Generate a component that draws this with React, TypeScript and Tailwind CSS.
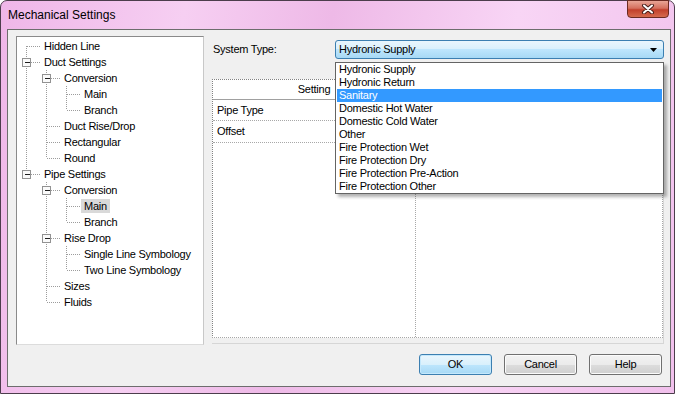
import React from "react";

type TreeNode = { label: string; children?: TreeNode[]; selected?: boolean };

type Row = {
  label: string;
  level: number;
  guides: boolean[];
  isLast: boolean;
  isFirstRoot: boolean;
  hasChildren: boolean;
  selected?: boolean;
};

const tree: TreeNode[] = [
  { label: "Hidden Line" },
  {
    label: "Duct Settings",
    children: [
      { label: "Conversion", children: [{ label: "Main" }, { label: "Branch" }] },
      { label: "Duct Rise/Drop" },
      { label: "Rectangular" },
      { label: "Round" },
    ],
  },
  {
    label: "Pipe Settings",
    children: [
      {
        label: "Conversion",
        children: [{ label: "Main", selected: true }, { label: "Branch" }],
      },
      {
        label: "Rise Drop",
        children: [{ label: "Single Line Symbology" }, { label: "Two Line Symbology" }],
      },
      { label: "Sizes" },
      { label: "Fluids" },
    ],
  },
];

const systemTypes = [
  "Hydronic Supply",
  "Hydronic Return",
  "Sanitary",
  "Domestic Hot Water",
  "Domestic Cold Water",
  "Other",
  "Fire Protection Wet",
  "Fire Protection Dry",
  "Fire Protection Pre-Action",
  "Fire Protection Other",
];

const flatten = (nodes: TreeNode[], level: number, guides: boolean[], out: Row[]) => {
  nodes.forEach((node, i) => {
    const isLast = i === nodes.length - 1;
    out.push({
      label: node.label,
      level,
      guides,
      isLast,
      isFirstRoot: level === 0 && i === 0,
      hasChildren: !!node.children,
      selected: node.selected,
    });
    if (node.children) flatten(node.children, level + 1, [...guides, !isLast], out);
  });
  return out;
};

const rows = flatten(tree, 0, [], []);

const LINE = "#9c9c9c";

const Connector = ({ row }: { row: Row }) => {
  const L = row.level;
  const cx = 9.5 + 20 * L;
  return (
    <svg width={20 * L + 24} height={16} className="shrink-0" shapeRendering="crispEdges">
      {row.guides.map((g, a) =>
        g ? (
          <line key={a} x1={9.5 + 20 * a} y1={0} x2={9.5 + 20 * a} y2={16} stroke={LINE} strokeDasharray="1 1" />
        ) : null
      )}
      <line x1={cx} y1={row.isFirstRoot ? 8 : 0} x2={cx} y2={row.isLast ? 8 : 16} stroke={LINE} strokeDasharray="1 1" />
      <line x1={cx} y1={8.5} x2={20 * L + 24} y2={8.5} stroke={LINE} strokeDasharray="1 1" />
      {row.hasChildren && (
        <g>
          <rect x={cx - 4} y={4.5} width={8} height={8} fill="#fafafa" stroke="#929292" />
          <line x1={cx - 2} y1={8.5} x2={cx + 3} y2={8.5} stroke="#1e1e1e" />
        </g>
      )}
    </svg>
  );
};

const CloseGlyph = () => (
  <svg width="14" height="10" viewBox="0 0 14 10">
    <path d="M3 1.5 L11 8.5 M11 1.5 L3 8.5" stroke="#4a1f1a" strokeWidth="4" strokeLinecap="round" />
    <path d="M3 1.5 L11 8.5 M11 1.5 L3 8.5" stroke="#ffffff" strokeWidth="2" strokeLinecap="round" />
  </svg>
);

const Button = ({ label, primary }: { label: string; primary?: boolean }) => (
  <button
    className={
      primary
        ? "w-[73px] h-[21px] rounded-[3px] border border-[#3c7fb1] bg-[linear-gradient(#eaf6fd_0%,#d9f0fc_50%,#bee6fd_50%,#a7d9f5_100%)] shadow-[inset_0_0_0_1px_#c4e8fc] text-black"
        : "w-[73px] h-[21px] rounded-[3px] border border-[#707070] bg-[linear-gradient(#f2f2f2_0%,#ebebeb_50%,#dddddd_50%,#cfcfcf_100%)] shadow-[inset_0_0_0_1px_#fbfbfb] text-black"
    }
  >
    {label}
  </button>
);

export default function App() {
  return (
    <div
      className="w-[675px] h-[394px] overflow-hidden text-[11px] tracking-[-0.25px] text-black"
      style={{ fontFamily: '"Liberation Sans", Arial, sans-serif' }}
    >
      <div className="w-full h-full flex flex-col rounded-t-[7px] border border-[#4c3d4c] bg-[linear-gradient(100deg,#efb6e8_0%,#f6cff2_25%,#eeb9e7_45%,#f8d5f5_70%,#f1c0ec_100%)] pl-[6px] pr-[3px] pb-[6px]">
        {/* Title bar */}
        <div className="h-[28px] shrink-0 flex items-start justify-between">
          <div className="pt-[5px] pl-[1px] text-[12px] tracking-normal text-black">Mechanical Settings</div>
          <div className="mr-[2px] w-[42px] h-[18px] -mt-px rounded-b-[4px] border border-[#6b2a22] bg-[linear-gradient(#e9a596_0%,#d5705e_45%,#c2402c_55%,#d56a4e_100%)] flex items-center justify-center">
            <CloseGlyph />
          </div>
        </div>

        {/* Client area */}
        <div className="flex-1 border border-[#6d6d6d] bg-[#f0f0f0] flex flex-col pt-[6px] pl-[8px] pr-[6px] pb-[11px]">
          <div className="flex gap-[8px]">
            {/* Tree */}
            <div className="w-[188px] h-[309px] bg-white border border-t-[#8a8a8a] border-l-[#8a8a8a] border-r-[#c8c8c8] border-b-[#dcdcdc] pt-px">
              {rows.map((row, i) => (
                <div key={i} className="h-[16px] flex items-center">
                  <Connector row={row} />
                  <span
                    className={`h-[14px] leading-[14px] px-[3px] whitespace-nowrap ${
                      row.selected ? "bg-[#d9d9d9]" : ""
                    }`}
                  >
                    {row.label}
                  </span>
                </div>
              ))}
            </div>

            {/* Right column */}
            <div className="relative w-[452px] pt-[4px] flex flex-col">
              <div className="h-[19px] flex items-center">
                <div className="w-[123px] pl-px">System Type:</div>
                <div className="w-[329px] h-[19px] rounded-[3px] border border-[#3c7fb1] bg-[linear-gradient(#eaf6fd_0%,#d9f0fc_50%,#bee6fd_50%,#a7d9f5_100%)] flex items-center justify-between pl-[3px] pr-[6px]">
                  <span>Hydronic Supply</span>
                  <svg width="7" height="4" viewBox="0 0 7 4">
                    <path d="M0 0 H7 L3.5 4 Z" fill="#000" />
                  </svg>
                </div>
              </div>

              {/* Grid */}
              <div className="mt-[20px] h-[265px] border-r border-b border-[#d6d6d6]">
                <div className="h-[259px] bg-white border-l border-t border-[#828282] flex border-r border-r-[#a8a8a8] border-b border-b-[#a8a8a8] border-dotted">
                  <div className="w-[203px] border-r border-dotted border-[#a8a8a8] flex flex-col">
                    <div className="h-[20px] border-b border-[#a0a0a0] flex items-center justify-center">Setting</div>
                    <div className="h-[21px] border-b border-dotted border-[#a8a8a8] flex items-center pl-[4px]">Pipe Type</div>
                    <div className="h-[22px] border-b border-dotted border-[#a8a8a8] flex items-center pl-[4px]">Offset</div>
                  </div>
                  <div className="flex-1 flex flex-col">
                    <div className="h-[20px] border-b border-[#a0a0a0] flex items-center justify-center">Value</div>
                    <div className="h-[21px] border-b border-dotted border-[#a8a8a8]" />
                    <div className="h-[22px] border-b border-dotted border-[#a8a8a8]" />
                  </div>
                </div>
              </div>

              {/* Open dropdown list */}
              <div className="absolute left-[123px] top-[26px] w-[329px] bg-white border border-[#646464] px-px shadow-[3px_3px_3px_rgba(0,0,0,0.3)]">
                {systemTypes.map((t) => (
                  <div
                    key={t}
                    className={`h-[13px] leading-[13px] pl-[2px] whitespace-nowrap ${
                      t === "Sanitary" ? "bg-[#3399ff] text-white" : ""
                    }`}
                  >
                    {t}
                  </div>
                ))}
              </div>
            </div>
          </div>

          {/* Buttons */}
          <div className="mt-[9px] flex justify-end gap-[12px] pr-[2px]">
            <Button label="OK" primary />
            <Button label="Cancel" />
            <Button label="Help" />
          </div>
        </div>
      </div>
    </div>
  );
}
